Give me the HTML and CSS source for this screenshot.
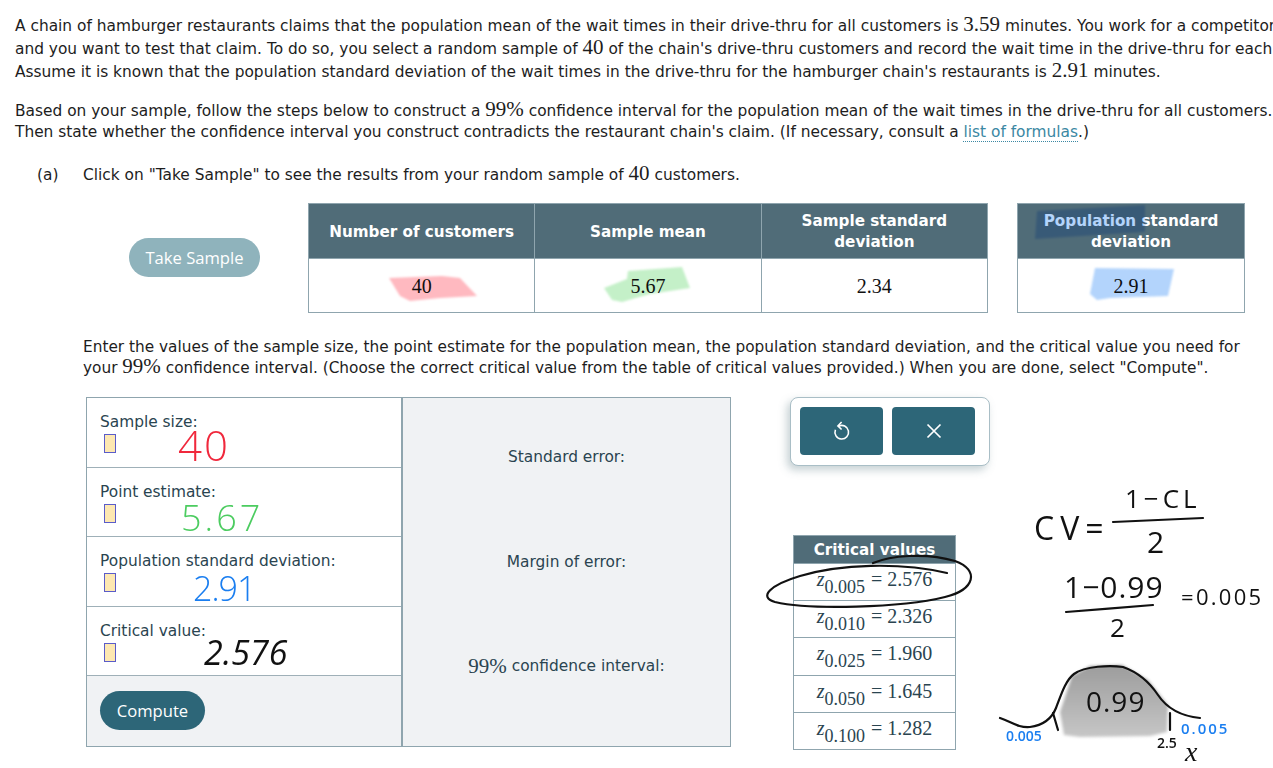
FILE: index.html
```html
<!DOCTYPE html>
<html lang="en">
<head>
    <meta charset="UTF-8">
    <title>Confidence interval</title>
    <link rel="stylesheet" href="styles.css">
</head>
<body>
    <div class="page">
        <p class="intro">A chain of hamburger restaurants claims that the population mean of the wait times in their drive-thru for all customers is <span class="num">3.59</span> minutes. You work for a competitor<br>and you want to test that claim. To do so, you select a random sample of <span class="num">40</span> of the chain's drive-thru customers and record the wait time in the drive-thru for each<br>Assume it is known that the population standard deviation of the wait times in the drive-thru for the hamburger chain's restaurants is <span class="num">2.91</span> minutes.</p>
        <p class="intro second">Based on your sample, follow the steps below to construct a <span class="num">99%</span> confidence interval for the population mean of the wait times in the drive-thru for all customers.<br>Then state whether the confidence interval you construct contradicts the restaurant chain's claim. (If necessary, consult a <a href="#" class="link">list of formulas</a>.)</p>

        <div class="part_head">
            <span class="part_label">(a)</span>
            <span>Click on "Take Sample" to see the results from your random sample of <span class="num">40</span> customers.</span>
        </div>

        <div class="sample_row">
            <button class="take_btn">Take Sample</button>
            <table class="data_table main_table">
                <tr>
                    <th>Number of customers</th>
                    <th>Sample mean</th>
                    <th>Sample standard<br>deviation</th>
                </tr>
                <tr>
                    <td>40</td>
                    <td>5.67</td>
                    <td>2.34</td>
                </tr>
            </table>
            <table class="data_table pop_table">
                <tr><th>Population standard<br>deviation</th></tr>
                <tr><td>2.91</td></tr>
            </table>
        </div>

        <p class="enter_text">Enter the values of the sample size, the point estimate for the population mean, the population standard deviation, and the critical value you need for<br>your <span class="num">99%</span> confidence interval. (Choose the correct critical value from the table of critical values provided.) When you are done, select "Compute".</p>

        <div class="work_row">
            <div class="panel">
                <div class="inputs">
                    <div class="field"><label>Sample size:</label><span class="box"></span></div>
                    <div class="field"><label>Point estimate:</label><span class="box"></span></div>
                    <div class="field"><label>Population standard deviation:</label><span class="box"></span></div>
                    <div class="field"><label>Critical value:</label><span class="box"></span></div>
                    <div class="compute_row"><button class="compute_btn">Compute</button></div>
                </div>
                <div class="results">
                    <div>Standard error:</div>
                    <div>Margin of error:</div>
                    <div><span class="num">99%</span> confidence interval:</div>
                </div>
            </div>

            <div class="side">
                <div class="toolbar">
                    <button class="tool_btn" aria-label="Undo">
                        <svg width="18" height="20" viewBox="0 0 18 20" fill="none" stroke="#fff" stroke-width="1.6">
                            <path d="M5.6 5.2a6.8 6.8 0 1 1-3.2 3.6"/>
                            <path d="M8.6 1 4.9 4.9l3.7 3.6"/>
                        </svg>
                    </button>
                    <button class="tool_btn" aria-label="Close">
                        <svg width="16" height="16" viewBox="0 0 16 16" fill="none" stroke="#fff" stroke-width="1.7">
                            <path d="M1.5 1.5l13 13M14.5 1.5l-13 13"/>
                        </svg>
                    </button>
                </div>
                <table class="crit_table">
                    <tr><th>Critical values</th></tr>
                    <tr><td><i>z</i><sub>0.005</sub><span class="crit_val">= 2.576</span></td></tr>
                    <tr><td><i>z</i><sub>0.010</sub><span class="crit_val">= 2.326</span></td></tr>
                    <tr><td><i>z</i><sub>0.025</sub><span class="crit_val">= 1.960</span></td></tr>
                    <tr><td><i>z</i><sub>0.050</sub><span class="crit_val">= 1.645</span></td></tr>
                    <tr><td><i>z</i><sub>0.100</sub><span class="crit_val">= 1.282</span></td></tr>
                </table>
            </div>
        </div>
    </div>

    <!-- pen marks on top of the page -->
    <svg class="marks" width="1273" height="768" viewBox="0 0 1273 768" fill="none" stroke-linecap="round" stroke-linejoin="round">
        <defs>
            <linearGradient id="bell_fill" x1="0" y1="0" x2="0" y2="1">
                <stop offset="0" stop-color="#9c9c9c"/>
                <stop offset="1" stop-color="#c6c6c6"/>
            </linearGradient>
        </defs>
        <g class="hilite">
            <path fill="#ffb9c0" d="M389 278 442 276 460 278 477 296 440 298 410 301 400 296Z"/>
            <path fill="#c4f0c8" d="M604 288 627 279 628 271 682 267 690 288 650 294 622 302 612 300Z"/>
            <path fill="#b3d4fc" d="M1095 268 1174 269 1168 296 1110 298 1097 300 1090 294Z"/>
            <path fill="#b3d4fc" d="M1037 211 1145 205 1145 232 1035 239Z"/>
        </g>
        <path class="soft" fill="url(#bell_fill)" d="M1060 712 1072 676 1090 666 1122 665 1148 680 1168 705 1167 732 1150 736 1080 737 1064 735Z"/>
        <g stroke="#111" stroke-width="2.2">
            <path d="M947 573C900 562 840 564 800 576 770 585 758 597 775 602 810 610 900 608 945 597 975 590 980 570 955 561 925 552 890 556 873 563"/>
            <path d="M1113 522 1203 518"/>
            <path d="M1066 612C1090 610 1130 607 1153 605"/>
            <path d="M1000 718C1012 722 1018 728 1030 727 1045 725 1052 718 1056 708 1062 692 1066 680 1074 674 1085 666 1110 665 1123 667 1140 673 1150 683 1158 695 1166 707 1180 716 1200 718"/>
            <path d="M1053 713 1058 730M1170 713 1170 730"/>
        </g>
    </svg>

    <div class="ink">
        <span class="pen red w40">40</span>
        <span class="pen green w567">5.67</span>
        <span class="pen blue w291">2.91</span>
        <span class="pen black w2576">2.576</span>
        <span class="pen black wcl">1−CL</span>
        <span class="pen black wcv">CV=</span>
        <span class="pen black wtwo">2</span>
        <span class="pen black wfrac">1−0.99</span>
        <span class="pen black wtwob">2</span>
        <span class="pen black wres">=0.005</span>
        <span class="pen black wbell">0.99</span>
        <span class="pen blue wleft">0.005</span>
        <span class="pen blue wright">0.005</span>
        <span class="pen black wz">2.5</span>
        <span class="pen black wx">x</span>
    </div>
</body>
</html>
```

FILE: styles.css
```css
* { margin: 0; padding: 0; box-sizing: border-box; }
html, body { width: 1273px; height: 768px; overflow: hidden; background: #fff; }
body {
    font-family: "DejaVu Sans", Verdana, sans-serif;
    font-size: 15.4px;
    color: #1d1d1d;
    position: relative;
}
.page { padding: 15px 0 0 15px; }
.num { font-family: "Liberation Serif", serif; font-size: 21px; line-height: 0; }

.intro { line-height: 23px; white-space: nowrap; }
.intro.second { margin-top: 17px; line-height: 21px; }
.link {
    color: #3b88a3;
    text-decoration: none;
    border-bottom: 1px dotted #3b88a3;
}

.part_head { display: flex; margin-top: 21px; padding-left: 22px; line-height: 23px; white-space: nowrap; }
.part_label { width: 46px; }

.sample_row { display: flex; align-items: center; margin-top: 16px; padding-left: 114px; height: 110px; }
.take_btn {
    width: 131px;
    height: 39px;
    margin: 0 48px 1px 0;
    border: 0;
    border-radius: 20px;
    background: #8fb3bc;
    color: #fff;
    font-family: "Open Sans", sans-serif;
    font-size: 16.6px;
}
.data_table { border-collapse: collapse; height: 110px; table-layout: fixed; }
.data_table th {
    height: 55px;
    padding-top: 2px;
    background: #506c78;
    border: 1px solid #8fa5ae;
    color: #fff;
    font-size: 15.2px;
    line-height: 21px;
}
.data_table td {
    padding-top: 1px;
    border: 1px solid #8fa5ae;
    text-align: center;
    font-family: "Liberation Serif", serif;
    font-size: 20px;
    color: #111;
}
.main_table { width: 680px; margin-right: 29px; }
.pop_table { width: 228px; }

.enter_text { margin: 24px 0 0 68px; font-size: 15.33px; line-height: 21px; white-space: nowrap; }

.work_row { display: flex; align-items: flex-start; margin: 18px 0 0 71px; }
.panel {
    display: flex;
    width: 645px;
    height: 350px;
    border: 1px solid #8fa5ae;
    color: #2a4450;
    margin-right: 59px;
}
.inputs { width: 316px; display: flex; flex-direction: column; border-right: 2px solid #8fa5ae; }
.field {
    height: 69.6px;
    padding: 14px 0 0 13px;
    border-bottom: 1px solid #9fb0b8;
}
.field label { display: block; line-height: 20px; }
.box {
    display: block;
    width: 12px;
    height: 19px;
    margin: 2px 0 0 4px;
    background: #fde8b2;
    border: 1px solid #5a5cc9;
}
.compute_row { flex: 1; background: #f0f2f4; padding: 15px 0 0 13px; }
.compute_btn {
    width: 105px;
    height: 39px;
    border: 0;
    border-radius: 20px;
    background: #2d6678;
    color: #fff;
    font-family: "Open Sans", sans-serif;
    font-size: 16.6px;
}
.results { flex: 1; background: #f0f2f4; padding-top: 7px; text-align: center; }
.results div { height: 104.5px; display: flex; align-items: center; justify-content: center; gap: 5px; }

.side { display: flex; flex-direction: column; align-items: flex-start; }
.toolbar {
    display: flex;
    gap: 9px;
    width: 200px;
    height: 69px;
    padding: 9px;
    border: 1px solid #a9bec6;
    border-radius: 8px;
    background: #fff;
    box-shadow: -3px 4px 8px rgba(90, 120, 130, .35);
}
.tool_btn {
    width: 83px;
    height: 48px;
    border: 0;
    border-radius: 4px;
    background: #2d6678;
    display: flex;
    align-items: center;
    justify-content: center;
}
.crit_table { border-collapse: collapse; width: 163px; margin: 69px 0 0 3px; }
.crit_table th {
    height: 28px;
    background: #506c78;
    color: #fff;
    border: 1px solid #8fa5ae;
    font-size: 15.2px;
}
.crit_table td {
    height: 37.2px;
    padding-top: 1px;
    border: 1px solid #8fa5ae;
    text-align: center;
    white-space: nowrap;
    font-family: "Liberation Serif", serif;
    font-size: 20px;
    color: #2a4450;
}
.crit_table i { position: relative; top: -3px; }
.crit_table sub { font-size: 18px; line-height: 0; vertical-align: -4px; }
.crit_val { position: relative; top: -3px; margin-left: 6px; }

.marks { position: absolute; left: 0; top: 0; pointer-events: none; }
.hilite { mix-blend-mode: multiply; }
.hilite path { filter: blur(1px); }
.soft { filter: blur(1.5px); }

/* handwriting stays real text */
.ink { position: absolute; left: 0; top: 0; width: 1273px; height: 768px; pointer-events: none; }
.pen {
    position: absolute;
    font-family: "Open Sans", sans-serif;
    font-weight: 300;
    line-height: .74;
    white-space: nowrap;
}
.red { color: #f0283c; }
.green { color: #4ccc60; }
.blue { color: #1a7ef0; }
.black { color: #111; font-weight: 400; }
.w40 { left: 178px; top: 429px; font-size: 42px; letter-spacing: 2px; }
.w567 { left: 181px; top: 505px; font-size: 36px; letter-spacing: 3px; }
.w291 { left: 193px; top: 576px; font-size: 34px; letter-spacing: -1px; }
.w2576 { left: 204px; top: 640px; font-size: 34px; font-style: italic; }
.wcl { left: 1125px; top: 489px; font-size: 26px; letter-spacing: 4px; }
.wcv { left: 1034px; top: 516px; font-size: 32px; letter-spacing: 6px; }
.wtwo { left: 1147px; top: 531px; font-size: 30px; }
.wfrac { left: 1064px; top: 576px; font-size: 30px; letter-spacing: 1px; }
.wtwob { left: 1110px; top: 618px; font-size: 26px; }
.wres { left: 1181px; top: 588px; font-size: 22px; letter-spacing: 2.3px; }
.wbell { left: 1086px; top: 691px; font-size: 28px; letter-spacing: 1px; }
.wleft { left: 1006px; top: 731px; font-size: 14px; font-weight: 600; }
.wright { left: 1181px; top: 723px; font-size: 15px; font-weight: 600; letter-spacing: 2px; }
.wz { left: 1157px; top: 738px; font-size: 14px; font-weight: 600; }
.wx { left: 1185px; top: 742px; font-family: "Liberation Serif", serif; font-size: 28px; font-style: italic; }
```
